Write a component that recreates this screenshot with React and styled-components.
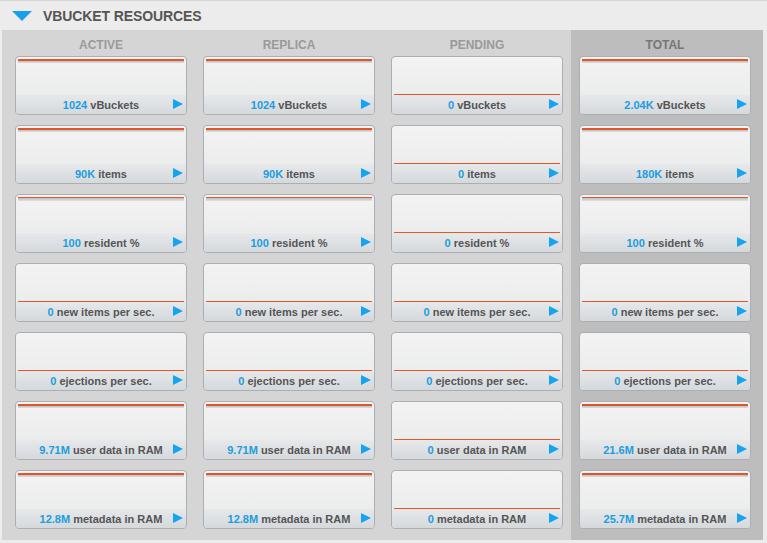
import React from 'react';
import styled, {createGlobalStyle} from 'styled-components';

const GlobalStyle = createGlobalStyle`
  html, body {
    margin: 0;
    padding: 0;
    background: #ececec;
    font-family: "Liberation Sans", Arial, sans-serif;
  }
`;

const stats = [
  {label: 'vBuckets', values: ['1024', '1024', '0', '2.04K'], kinds: ['full', 'full', 'zero', 'full']},
  {label: 'items', values: ['90K', '90K', '0', '180K'], kinds: ['full', 'full', 'zero', 'full']},
  {label: 'resident %', values: ['100', '100', '0', '100'], kinds: ['thin', 'thin', 'zero', 'thin']},
  {label: 'new items per sec.', values: ['0', '0', '0', '0'], kinds: ['zero', 'zero', 'zero', 'zero']},
  {label: 'ejections per sec.', values: ['0', '0', '0', '0'], kinds: ['zero', 'zero', 'zero', 'zero']},
  {label: 'user data in RAM', values: ['9.71M', '9.71M', '0', '21.6M'], kinds: ['full', 'full', 'zero', 'full']},
  {label: 'metadata in RAM', values: ['12.8M', '12.8M', '0', '25.7M'], kinds: ['full', 'full', 'zero', 'full']},
];

const columns = ['ACTIVE', 'REPLICA', 'PENDING', 'TOTAL'];

export default function App() {
  return (
    <React.Fragment>
      <GlobalStyle />
      <Page>
        <Header>
          <Caret viewBox="0 0 20 10">
            <polygon points="0,0 20,0 10,10" fill="#18a0ea" />
          </Caret>
          <Title>VBUCKET RESOURCES</Title>
        </Header>
        <Panel>
          <Group>
            {columns.slice(0, 3).map((name, i) => (
              <Column key={name}>
                <ColumnTitle>{name}</ColumnTitle>
                {stats.map(s => (
                  <StatCard key={s.label} value={s.values[i]} label={s.label} kind={s.kinds[i]} />
                ))}
              </Column>
            ))}
          </Group>
          <TotalGroup>
            <Column>
              <ColumnTitle total>TOTAL</ColumnTitle>
              {stats.map(s => (
                <StatCard key={s.label} value={s.values[3]} label={s.label} kind={s.kinds[3]} />
              ))}
            </Column>
          </TotalGroup>
        </Panel>
      </Page>
    </React.Fragment>
  );
}

function StatCard({value, label, kind}) {
  return (
    <Card>
      <Chart>
        <Line kind={kind} />
      </Chart>
      <Footer>
        <Caption>
          <Num>{value}</Num> {label}
        </Caption>
        <Play viewBox="0 0 10 10">
          <polygon points="0,0 10,5 0,10" fill="#14a4f2" />
        </Play>
      </Footer>
    </Card>
  );
}

const Page = styled.div`
  width: 767px;
  height: 543px;
  border-top: 1px solid #d6d6d6;
  box-sizing: border-box;
  background: #ececec;
`;

const Header = styled.div`
  height: 29px;
  display: flex;
  align-items: center;
  padding-left: 12px;
  gap: 11px;
`;

const Caret = styled.svg`
  width: 20px;
  height: 10px;
  margin-top: 1px;
`;

const Title = styled.div`
  font-size: 14px;
  font-weight: bold;
  color: #555;
  letter-spacing: -0.1px;
`;

const Panel = styled.div`
  margin: 0 4px 0 2px;
  height: 510px;
  display: flex;
  background: #d5d5d5;
`;

const Group = styled.div`
  display: flex;
  gap: 16px;
  padding: 0 8px 0 13px;
`;

const TotalGroup = styled.div`
  width: 192px;
  box-sizing: border-box;
  padding: 0 12px 0 8px;
  background: #bdbdbd;
`;

const Column = styled.div`
  width: 172px;
  display: flex;
  flex-direction: column;
  gap: 10px;
`;

const ColumnTitle = styled.div`
  height: 26px;
  margin-bottom: -10px;
  display: flex;
  align-items: center;
  justify-content: center;
  padding-top: 3px;
  box-sizing: border-box;
  font-size: 12px;
  font-weight: bold;
  color: ${p => (p.total ? '#777' : '#9a9a9a')};
`;

const Card = styled.div`
  height: 59px;
  box-sizing: border-box;
  border: 1px solid #a9afb5;
  border-radius: 4px;
  overflow: hidden;
  display: flex;
  flex-direction: column;
  background: linear-gradient(#f3f3f3, #e8e9ea);
`;

const Chart = styled.div`
  height: 38px;
  padding: 0 2px;
  display: flex;
  flex-direction: column;
`;

const Line = styled.div`
  ${p =>
    p.kind === 'zero'
      ? `margin-top: auto; height: 1px; background: #e2582a;`
      : p.kind === 'thin'
      ? `margin-top: 2px; height: 1px; background: #e2582a; box-shadow: 0 1px 0 #c4c4c4, 0 2px 0 #cfcfcf, 0 3px 0 #dcdcdc;`
      : `margin-top: 2px; height: 2px; background: #e0562a; box-shadow: 0 1px 0 #c6c6c6, 0 2px 0 #d6d6d6;`}
`;

const Footer = styled.div`
  height: 19px;
  position: relative;
  display: flex;
  align-items: center;
  justify-content: center;
  background: linear-gradient(#e6e8ea, #d6d9dc);
`;

const Caption = styled.div`
  font-size: 11px;
  font-weight: bold;
  color: #555;
  white-space: nowrap;
`;

const Num = styled.span`
  color: #1b9de0;
`;

const Play = styled.svg`
  position: absolute;
  right: 3px;
  top: 4px;
  width: 10px;
  height: 10px;
`;
